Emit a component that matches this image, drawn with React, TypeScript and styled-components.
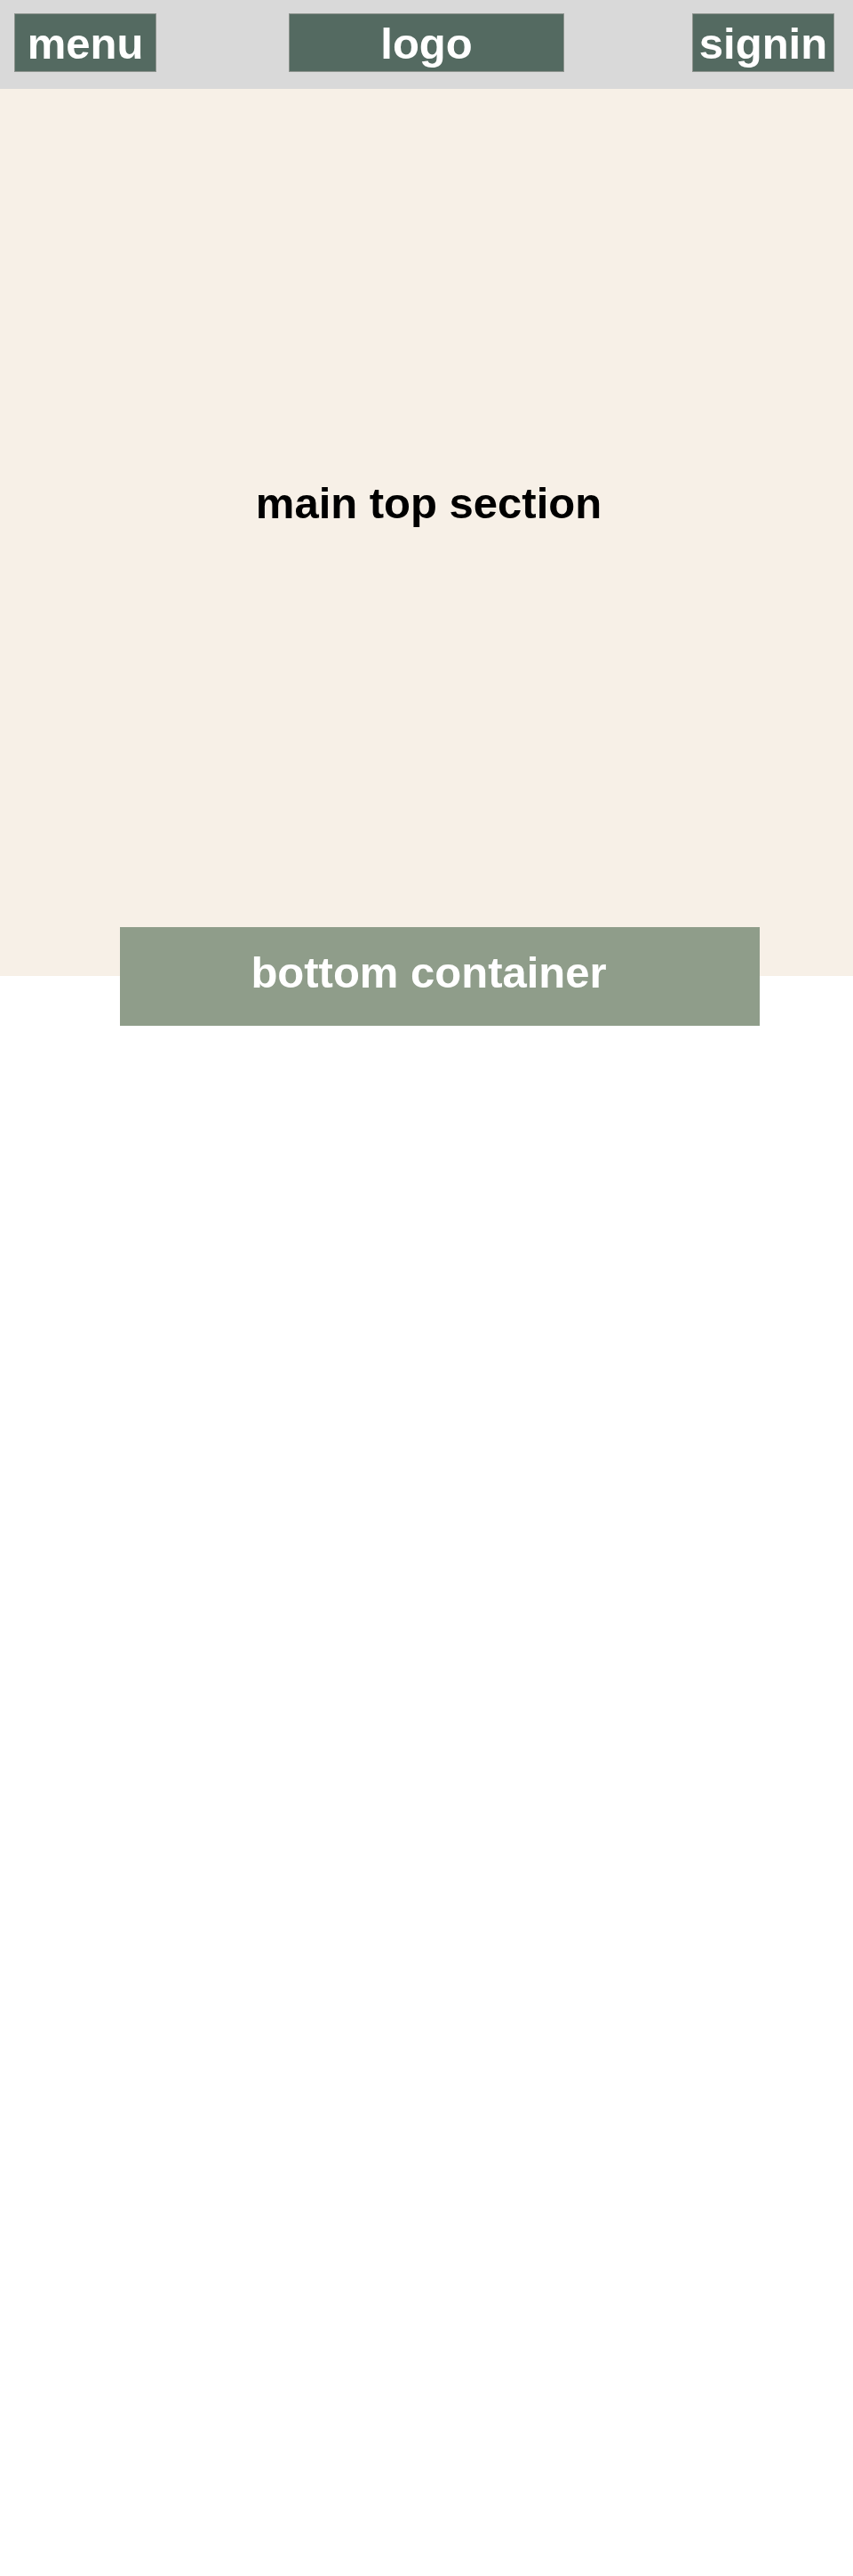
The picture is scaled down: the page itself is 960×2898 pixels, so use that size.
import React from 'react';
import styled, { createGlobalStyle } from 'styled-components';

const GlobalStyle = createGlobalStyle`
  * {
    box-sizing: border-box;
  }
  body {
    margin: 0;
    background: #fff;
    font-family: "Liberation Sans", Arial, sans-serif;
  }
`

const Header = styled.header`
  height: 100px;
  padding: 15px 21px 0 16px;
  background: #d9d9d9;
  display: flex;
  justify-content: space-between;
  align-items: flex-start;
`

const NavBox = styled.div<{ $wide?: boolean }>`
  width: ${(p) => (p.$wide ? '310px' : '160px')};
  margin-left: ${(p) => (p.$wide ? '5px' : '0')};
  height: 66px;
  padding: 5px 0 4px;
  background: #546a61;
  border: 1px solid #8d938e;
  color: #fff;
  font-size: 49px;
  font-weight: bold;
  line-height: 56px;
  display: flex;
  justify-content: center;
  white-space: nowrap;
`

const Main = styled.main`
  height: 998px;
  padding: 0 0 66px 5px;
  background: #f7f0e7;
  display: flex;
  align-items: center;
  justify-content: center;
`

const MainTitle = styled.h1`
  margin: 0;
  font-size: 49px;
  font-weight: bold;
  line-height: 56px;
  color: #000;
`

const BottomContainer = styled.section`
  width: 720px;
  height: 111px;
  margin: -55px 0 0 135px;
  padding: 23px 25px 0 0;
  background: #8f9d8a;
  color: #fff;
  text-align: center;
  font-size: 49px;
  font-weight: bold;
  line-height: 56px;
`

export default function App() {
  return (
    <>
      <GlobalStyle />
      <Header>
        <NavBox>menu</NavBox>
        <NavBox $wide>logo</NavBox>
        <NavBox>signin</NavBox>
      </Header>
      <Main>
        <MainTitle>main top section</MainTitle>
      </Main>
      <BottomContainer>bottom container</BottomContainer>
    </>
  )
}
